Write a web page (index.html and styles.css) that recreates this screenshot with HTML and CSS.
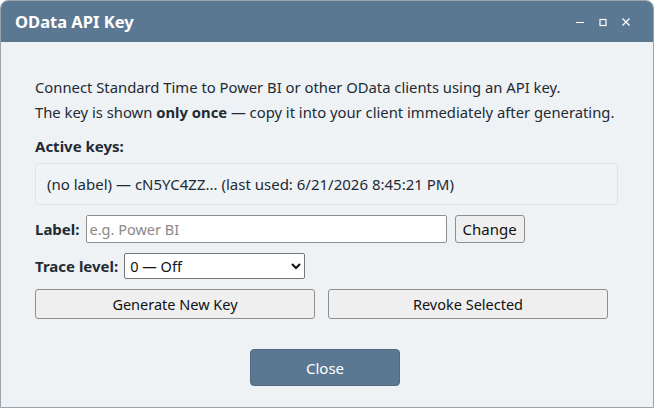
FILE: index.html
```html
<!DOCTYPE html>
<html>

<head>
    <link rel="stylesheet" href="styles.css">
</head>

<body>

    <div class="window">
        <div class="titlebar">
            <span class="title">OData API Key</span>
            <div class="controls">
                <svg width="10" height="10" viewBox="0 0 10 10"><path d="M1 5.5h8" stroke="#fff" stroke-width="1.2"/></svg>
                <svg width="10" height="10" viewBox="0 0 10 10"><rect x="2" y="2.5" width="6" height="6" fill="none" stroke="#fff" stroke-width="1.2"/></svg>
                <svg width="10" height="10" viewBox="0 0 10 10"><path d="M1.5 1.5l7 7M8.5 1.5l-7 7" stroke="#fff" stroke-width="1.3"/></svg>
            </div>
        </div>

        <div class="content">
            <p class="intro">Connect Standard Time to Power BI or other OData clients using an API key.<br>
                The key is shown <b>only once</b> &mdash; copy it into your client immediately after generating.</p>

            <div class="heading">Active keys:</div>
            <div class="keys">
                <div class="key">(no label) &mdash; cN5YC4ZZ... (last used: 6/21/2026 8:45:21 PM)</div>
            </div>

            <div class="row">
                <label>Label:</label>
                <input type="text" class="label-input" placeholder="e.g. Power BI">
                <button class="btn small">Change</button>
            </div>

            <div class="row">
                <label>Trace level:</label>
                <select class="trace">
                    <option>0 &mdash; Off</option>
                </select>
            </div>

            <div class="actions">
                <button class="btn">Generate New Key</button>
                <button class="btn">Revoke Selected</button>
            </div>

            <div class="footer">
                <button class="close">Close</button>
            </div>
        </div>
    </div>

</body>

</html>
```

FILE: styles.css
```css
* {
    box-sizing: border-box;
}

body {
    margin: 0px;
    padding: 0px;
    background: #ffffff;
    font-family: "Noto Sans", "Open Sans", sans-serif;
    color: #222a33;
}

.window {
    width: 654px;
    height: 408px;
    border: 1px solid #9ba3ab;
    border-radius: 8px 8px 0 0;
    overflow: hidden;
    background: #eef2f5;
    display: flex;
    flex-direction: column;
}

.titlebar {
    height: 41px;
    background: #5b7893;
    display: flex;
    align-items: center;
    justify-content: space-between;
    padding: 0 22px 0 14px;
    color: #ffffff;
}

.title {
    font-size: 16.5px;
    font-weight: bold;
}

.controls {
    display: flex;
    gap: 13px;
    align-items: center;
}

.controls svg {
    display: block;
}

.content {
    padding: 0 35px 0 34px;
    flex: 1;
    display: flex;
    flex-direction: column;
}

.intro {
    margin: 33px 0 0 0;
    font-size: 14.8px;
    line-height: 25px;
    white-space: nowrap;
}

.heading {
    margin-top: 9px;
    font-size: 15px;
    font-weight: bold;
    line-height: 24px;
}

.keys {
    margin-top: 5px;
    height: 42px;
    border: 1px solid #dde3e8;
    border-radius: 4px;
    background: #eff3f6;
    display: flex;
    align-items: center;
    padding: 0 11px;
}

.key {
    font-size: 15px;
}

.row {
    display: flex;
    align-items: center;
    margin-top: 10px;
}

.row + .row {
    margin-top: 10px;
}

.row label {
    font-size: 15px;
    font-weight: bold;
    margin-right: 6px;
}

.label-input {
    width: 361px;
    height: 28px;
    border: 1px solid #8f8f8f;
    border-radius: 2px;
    padding: 0 3px;
    font-family: inherit;
    font-size: 14.5px;
    background: #ffffff;
}

.label-input::placeholder {
    color: #8a8a8a;
}

.trace {
    width: 181px;
    height: 26px;
    border: 1px solid #767676;
    border-radius: 2px;
    font-family: inherit;
    font-size: 14.5px;
    background: #ffffff;
    color: #111111;
    padding: 0 1px;
}

.btn {
    font-family: inherit;
    font-size: 14.5px;
    background: #efefef;
    border: 1px solid #8f8f8f;
    border-radius: 3px;
    color: #111111;
    height: 30px;
}

.btn.small {
    margin-left: 8px;
    height: 28px;
    padding: 0 7px;
    font-size: 15px;
}

.actions {
    margin-top: 10px;
    display: flex;
    gap: 13px;
}

.actions .btn {
    width: 280px;
}

.footer {
    margin-top: 30px;
    display: flex;
    justify-content: center;
    padding-right: 3px;
}

.close {
    width: 150px;
    height: 37px;
    background: #5b7893;
    color: #ffffff;
    border: 1px solid #4f6a83;
    border-radius: 4px;
    font-family: inherit;
    font-size: 15px;
}
```
